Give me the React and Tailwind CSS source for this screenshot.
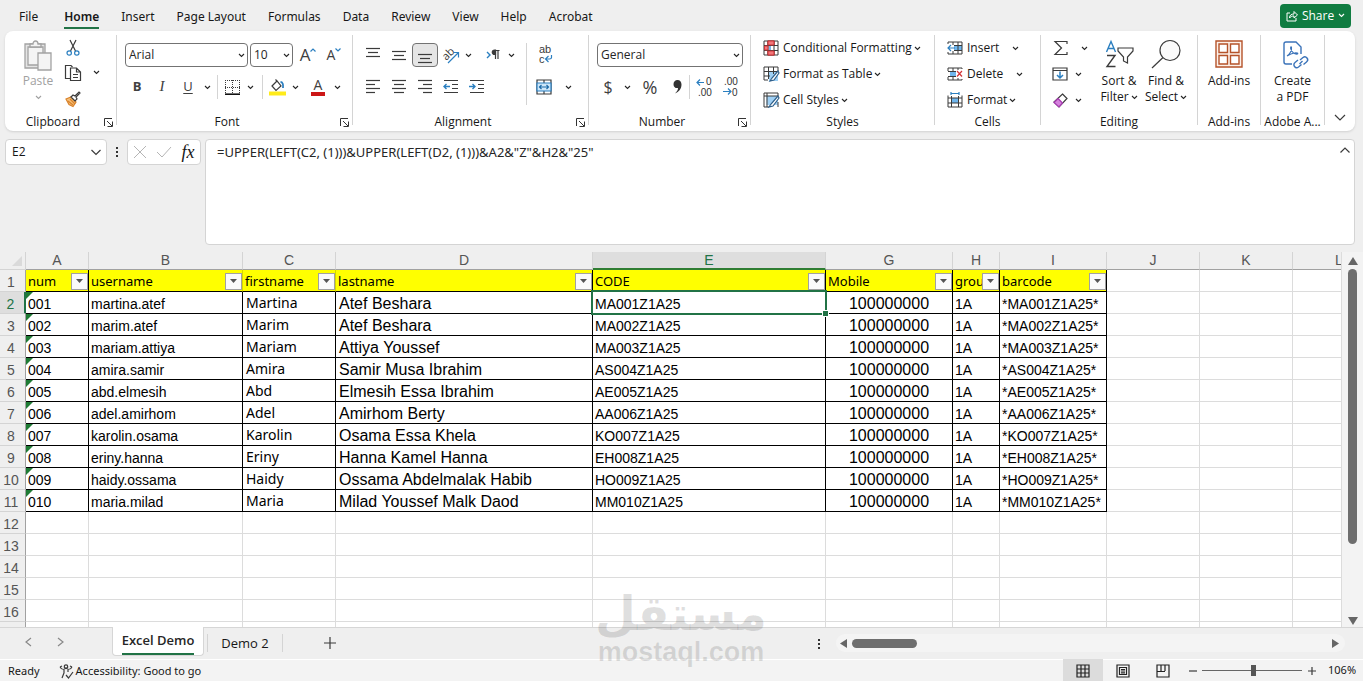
import { useState } from 'react';

const tabs = ['File', 'Home', 'Insert', 'Page Layout', 'Formulas', 'Data', 'Review', 'View', 'Help', 'Acrobat'];

const columns = [
  { id: 'A', col: 'w-[63px]', title: 'num', line: true },
  { id: 'B', col: 'w-[154px]', title: 'username' },
  { id: 'C', col: 'w-[93px]', title: 'firstname' },
  { id: 'D', col: 'w-[257px]', title: 'lastname', line: true },
  { id: 'E', col: 'w-[233px]', title: 'CODE', line: true },
  { id: 'G', col: 'w-[127px]', title: 'Mobile', line: true },
  { id: 'H', col: 'w-[47px]', title: 'group', line: true },
  { id: 'I', col: 'w-[107px]', title: 'barcode', line: true },
  { id: 'J', col: 'w-[93px]' },
  { id: 'K', col: 'w-[93px]' },
  { id: 'L', col: 'w-[93px]' },
];

const people = [
  ['001', 'martina.atef', 'Martina', 'Atef Beshara', 'MA001Z1A25'],
  ['002', 'marim.atef', 'Marim', 'Atef Beshara', 'MA002Z1A25'],
  ['003', 'mariam.attiya', 'Mariam', 'Attiya Youssef', 'MA003Z1A25'],
  ['004', 'amira.samir', 'Amira', 'Samir Musa Ibrahim', 'AS004Z1A25'],
  ['005', 'abd.elmesih', 'Abd', 'Elmesih Essa Ibrahim', 'AE005Z1A25'],
  ['006', 'adel.amirhom', 'Adel', 'Amirhom Berty', 'AA006Z1A25'],
  ['007', 'karolin.osama', 'Karolin', 'Osama Essa Khela', 'KO007Z1A25'],
  ['008', 'eriny.hanna', 'Eriny', 'Hanna Kamel Hanna', 'EH008Z1A25'],
  ['009', 'haidy.ossama', 'Haidy', 'Ossama Abdelmalak Habib', 'HO009Z1A25'],
  ['010', 'maria.milad', 'Maria', 'Milad Youssef Malk Daod', 'MM010Z1A25'],
];

// The last row is only a sliver above the sheet tabs, so it has no number
const emptyRows = ['12', '13', '14', '15', '16', ''];

function Chevron({ className = 'text-neutral-800' }) {
  return (
    <svg width="7" height="5" viewBox="0 0 7 5" className={`shrink-0 ${className}`} fill="none" stroke="currentColor" strokeWidth="1.1">
      <path d="M1 1l2.500 2.500L6 1" />
    </svg>
  );
}

function Icon({ w = 18, h = 18, children }) {
  return (
    <svg width={w} height={h} viewBox={`0 0 ${w} ${h}`} className="shrink-0 overflow-visible" fill="none" stroke="#3b3b3b" strokeWidth="1.2">
      {children}
    </svg>
  );
}

function Tool({ label, className = 'w-[26px]', children }) {
  return (
    <button type="button" aria-label={label} className={`flex h-6 shrink-0 items-center justify-center ${className}`}>
      {children}
    </button>
  );
}

function Group({ label, className, launcher, children }) {
  return (
    <>
      <section className={`flex shrink-0 flex-col pt-1 ${className}`}>
        <div className="flex h-[78px]">{children}</div>
        <div className="flex h-[18px] items-center">
          <span className="flex-1 text-center whitespace-nowrap">{label}</span>
          {launcher && (
            <button type="button" aria-label={`${label} settings`} className="flex w-[15px] justify-center">
              <svg width="9" height="9" viewBox="0 0 9 9" fill="none" stroke="#333">
                <path d="M.5 8V.5H8M3 3l5 5M8.500 3.500v5h-5" />
              </svg>
            </button>
          )}
        </div>
      </section>
      <div className="mt-1 mb-1.5 w-px shrink-0 bg-neutral-300" />
    </>
  );
}

function Dropdown({ label, options, className }) {
  return (
    <div className={`relative ${className}`}>
      <select aria-label={label} className="block h-6 w-full appearance-none rounded border border-neutral-500 bg-white pl-[3px] text-xs text-neutral-800">
        {options.map((o) => (
          <option key={o}>{o}</option>
        ))}
      </select>
      <span className="pointer-events-none absolute top-2.5 right-[3px]">
        <Chevron />
      </span>
    </div>
  );
}

// Paragraph icon, x/width pair per line
function Lines({ rows, top = 2, step = 4 }) {
  return (
    <Icon w={16}>
      {rows.map(([x, w], i) => (
        <path key={i} d={`M${x} ${top + i * step + 0.5}h${w}`} />
      ))}
    </Icon>
  );
}

function Clipboard() {
  return (
    <Group label="Clipboard" className="w-[111px]" launcher>
      <button type="button" className="ml-2.5 flex w-[46px] flex-col items-center pt-[5px] text-neutral-400">
        <svg width="28" height="31" viewBox="0 0 28 31" fill="#f4f4f4" stroke="#a3a3a3" strokeWidth="1.3">
          <path d="M1 4h20v24H1z" fill="#e4e4e4" />
          <path d="M4 7h15v18H4z" />
          <path d="M6 7V4h3c0-4 5-4 5 0h3v3z" />
          <path d="M14 13h13v17H14z" />
        </svg>
        <span className="leading-5">Paste</span>
        <span className="mt-1">
          <Chevron className="text-neutral-400" />
        </span>
      </button>
      <div className="flex flex-col">
        <Tool label="Cut" className="mt-px w-6">
          <Icon w={14} h={16}>
            <path d="M4 0l5.500 11M10 0L4.500 11" />
            <circle cx="3.200" cy="13" r="2.200" stroke="#2b7fc0" />
            <circle cx="10.800" cy="13" r="2.200" stroke="#2b7fc0" />
          </Icon>
        </Tool>
        <div className="flex">
          <Tool label="Copy" className="mt-px w-6">
            <Icon w={16} h={16}>
              <path d="M5 13.500H.5V.5h5.500l1.500 1.500" />
              <path d="M5.500 3h6l4 4v8.500h-10zM11.500 3v4h4M8 9.500h5M8 12.500h5" />
            </Icon>
          </Tool>
          <Tool label="Copy options" className="w-[22px]">
            <Chevron />
          </Tool>
        </div>
        <Tool label="Format painter" className="mt-0.5 w-6">
          <Icon w={16} h={16}>
            <path d="M1 8l5-2 5 5-3 4.500-4-2z" fill="#f6c27c" stroke="#d9822b" />
            <path d="M3 10l5 4M5 8l5 5" stroke="#d9822b" />
            <path d="M6 6l2-2 2 1 4-4 1 1-4 4 1 2-2 2z" fill="#fff" />
          </Icon>
        </Tool>
      </div>
    </Group>
  );
}

function FontGroup() {
  return (
    <Group label="Font" className="w-[235px]" launcher>
      <div className="flex flex-col pt-1 pl-2">
        <div className="flex h-8 items-center">
          <Dropdown label="Font" options={['Arial', 'Calibri']} className="mr-0.5 w-[123px]" />
          <Dropdown label="Font size" options={['10', '11', '12']} className="mr-0.5 w-[43px]" />
          <Tool label="Grow font">
            <span className="text-[17px] text-neutral-700">A</span>
            <svg width="6" height="4" viewBox="0 0 6 4" className="mb-2.5" fill="none" stroke="#2b7fc0" strokeWidth="1.2"><path d="M.5 3.500L3 1l2.500 2.500" /></svg>
          </Tool>
          <Tool label="Shrink font">
            <span className="text-sm text-neutral-700">A</span>
            <svg width="6" height="4" viewBox="0 0 6 4" className="mb-2.5" fill="none" stroke="#2b7fc0" strokeWidth="1.2"><path d="M.5.5L3 3 5.500.5" /></svg>
          </Tool>
        </div>
        <div className="flex h-8 items-center text-neutral-700">
          <Tool label="Bold" className="w-6"><b className="text-[13px]">B</b></Tool>
          <Tool label="Italic"><i className="font-['Liberation_Serif'] text-[15px]">I</i></Tool>
          <Tool label="Underline"><u className="text-[13px] underline-offset-2">U</u></Tool>
          <Tool label="Underline style" className="w-3"><Chevron /></Tool>
          <div className="mx-1 h-6 w-px bg-neutral-300" />
          <Tool label="Borders" className="w-5">
            <Icon w={15} h={15}>
              <path d="M.5 0v13M7.500 0v13M14.500 0v13M0 .5h15M0 7.500h15" strokeDasharray="1 1" strokeWidth="1" />
              <path d="M0 14.200h15" stroke="#111" strokeWidth="1.600" />
            </Icon>
          </Tool>
          <Tool label="Border style" className="w-4"><Chevron /></Tool>
          <div className="mx-1 h-6 w-px bg-neutral-300" />
          <Tool label="Fill color" className="w-5">
            <Icon w={17} h={17}>
              <path d="M3 7l5-5 4 5-5 4.500zM8 2L6.500.5" />
              <path d="M11.500 3c2 0 3 2 2.500 6" stroke="#2b7fc0" strokeWidth="1.800" />
              <path d="M0 14.500h17" stroke="#ffeb1a" strokeWidth="4" />
            </Icon>
          </Tool>
          <Tool label="Fill color options" className="w-4"><Chevron /></Tool>
          <Tool label="Font color" className="w-[30px]">
            <span className="border-b-4 border-[#cc1616] px-[3px] text-sm leading-[14px]">A</span>
          </Tool>
          <Tool label="Font color options" className="w-2"><Chevron /></Tool>
        </div>
      </div>
    </Group>
  );
}

function Alignment() {
  return (
    <Group label="Alignment" className="w-[235px]" launcher>
      <div className="ml-[7px] flex w-[166px] flex-col pt-1">
        <div className="flex h-8 items-center">
          <Tool label="Top align"><Lines rows={[[1, 14], [3, 10], [1, 14]]} /></Tool>
          <Tool label="Middle align"><Lines rows={[[1, 14], [3, 10], [1, 14]]} top={5} /></Tool>
          <Tool label="Bottom align" className="w-[26px] rounded border border-neutral-500 bg-neutral-200"><Lines rows={[[1, 14], [3, 10], [1, 14]]} top={8} /></Tool>
          <Tool label="Orientation">
            <Icon>
              <text x="1" y="13" transform="rotate(-45 5 10)" fontSize="11" fill="#3b3b3b" stroke="none">ab</text>
              <path d="M6 17L16 7M11.500 6.500H16.500V11.500" stroke="#2b7fc0" />
            </Icon>
          </Tool>
          <Tool label="Orientation options" className="w-2"><Chevron /></Tool>
          <Tool label="Text direction" className="ml-2 w-[26px]">
            <Icon w={14} h={12}>
              <path d="M1 3l3 3-3 3" stroke="#2b7fc0" strokeWidth="1.400" />
              <path d="M9.500 10V1.500M12 10V1.500M13.500 1.500H9" />
              <path d="M9.500 1H8.500a2.200 2.200 0 000 4.500h1z" fill="#3b3b3b" />
            </Icon>
          </Tool>
          <Tool label="Direction options" className="w-2.5"><Chevron /></Tool>
        </div>
        <div className="flex h-8 items-center">
          <Tool label="Align left"><Lines rows={[[1, 14], [1, 9], [1, 14], [1, 9]]} /></Tool>
          <Tool label="Center"><Lines rows={[[1, 14], [3, 10], [1, 14], [3, 10]]} /></Tool>
          <Tool label="Align right"><Lines rows={[[1, 14], [6, 9], [1, 14], [6, 9]]} /></Tool>
          <Tool label="Decrease indent">
            <Icon w={16}>
              <path d="M1 2.500h14M9 6.500h6M9 10.500h6M1 14.500h14" />
              <path d="M7 8.500H1M3.500 6L1 8.500 3.500 11" stroke="#2b7fc0" strokeWidth="1.400" />
            </Icon>
          </Tool>
          <Tool label="Increase indent">
            <Icon w={16}>
              <path d="M1 2.500h14M9 6.500h6M9 10.500h6M1 14.500h14" />
              <path d="M0 8.500h6M3.500 6L6 8.500 3.500 11" stroke="#2b7fc0" strokeWidth="1.400" />
            </Icon>
          </Tool>
        </div>
      </div>
      <div className="mt-2 h-[62px] w-px bg-neutral-300" />
      <div className="flex flex-col pt-1">
        <div className="flex h-8 items-center">
          <Tool label="Wrap text" className="w-[36px]">
            <Icon w={15} h={18}>
              <g className="font-['Liberation_Sans']" fontSize="11" fill="#3b3b3b" stroke="none">
                <text x="1" y="7">ab</text>
                <text x="1" y="17">c</text>
              </g>
              <path d="M13.500 9v2.500c0 1-1 1.500-2 1.500H8M10.500 10L7.500 13l3 3" stroke="#2b7fc0" />
            </Icon>
          </Tool>
        </div>
        <div className="flex h-8 items-center">
          <Tool label="Merge and center" className="w-[34px]">
            <Icon w={16} h={16}>
              <path d="M1 1h14v14H1zM8 1v3M8 12v3" />
              <path d="M1 4h14v8H1z" fill="#cfe8fa" stroke="#2b7fc0" />
              <path d="M3.500 8h9M5.500 6l-2 2 2 2M10.500 6l2 2-2 2" stroke="#1c6aa8" />
            </Icon>
          </Tool>
          <Tool label="Merge options" className="w-[14px]"><Chevron /></Tool>
        </div>
      </div>
    </Group>
  );
}

function NumberGroup() {
  return (
    <Group label="Number" className="w-[161px]" launcher>
      <div className="flex flex-col pt-1 pl-2">
        <div className="flex h-8 items-center">
          <Dropdown label="Number format" options={['General', 'Number']} className="w-[146px]" />
        </div>
        <div className="flex h-8 items-center text-neutral-700">
          <Tool label="Currency" className="w-[22px]"><span className="text-base">$</span></Tool>
          <Tool label="Currency options" className="w-4"><Chevron /></Tool>
          <Tool label="Percent" className="w-[30px]"><span className="text-lg">%</span></Tool>
          <Tool label="Comma style" className="w-6">
            <svg width="9" height="14" viewBox="0 0 9 14" fill="#333">
              <path d="M4.500 0C7 0 8.500 2 8.500 4.500c0 4-2.500 7.500-6.500 9 2-2 3-3.500 3-5.500C2.500 8.500.5 7 .5 4.200.5 1.800 2.200 0 4.500 0z" />
            </svg>
          </Tool>
          <div className="h-6 w-px bg-neutral-300" />
          <Tool label="Increase decimal" className="w-7">
            <Icon w={16}>
              <g className="font-['Liberation_Sans']" fontSize="10" fill="#333" stroke="none">
                <text x="10" y="7">0</text>
                <text x="2" y="18">.00</text>
              </g>
              <path d="M8 4.500H1M4 1.500L1 4.500 4 7.500" stroke="#2b7fc0" />
            </Icon>
          </Tool>
          <Tool label="Decrease decimal" className="w-6">
            <Icon w={16}>
              <g className="font-['Liberation_Sans']" fontSize="10" fill="#333" stroke="none">
                <text x="2" y="7">.00</text>
                <text x="10" y="18">0</text>
              </g>
              <path d="M1 13.500h8M6 10.500L9 13.500 6 16.500" stroke="#2b7fc0" />
            </Icon>
          </Tool>
        </div>
      </div>
    </Group>
  );
}

function MenuRow({ icon, label, text = '' }) {
  return (
    <button type="button" className="flex h-[26px] items-center whitespace-nowrap">
      {icon}
      <span className={`mr-0.5 ml-1 ${text}`}>{label}</span>
      <Chevron />
    </button>
  );
}

function Styles() {
  return (
    <Group label="Styles" className="w-[183px]">
      <div className="flex flex-col items-start pl-3">
        <MenuRow
          label="Conditional Formatting"
          icon={
            <Icon w={16} h={16}>
              <path d="M5 1h6v4H5zM5 11h6v4H5z" fill="#f2777b" stroke="#d13438" />
              <path d="M1 1h14v14H1zM1 5.500h14M1 10.500h14M5 1v14M11 1v14" strokeWidth="1" />
              <path d="M5 1h6v4H5zM5 11h6v4H5zM1.500 6H5v4H1.500z" fill="#f2777b" stroke="#d13438" strokeWidth="1" />
              <path d="M6 6h2v4H6z" fill="#7db7e8" stroke="none" />
            </Icon>
          }
        />
        <MenuRow
          label="Format as Table"
          icon={
            <Icon w={16} h={16}>
              <path d="M6 5.500h9V15H6z" fill="#9fd0f5" stroke="none" />
              <path d="M15 5V1H1v13h4M1 5.500h14M1 10h6M5.500 1v12M10.500 1v7" strokeWidth="1" />
              <path d="M15 5l-6 7-2 3 4-1 5-7z" fill="#fff" stroke="#2f5f8a" />
            </Icon>
          }
        />
        <MenuRow
          label="Cell Styles"
          icon={
            <Icon w={16} h={16}>
              <path d="M3.500 4H15v9H3.500z" fill="#9fd0f5" stroke="none" />
              <path d="M15 5V1H1v14h5M1 4h14M4 1v14M15 15v-5" strokeWidth="1" />
              <path d="M15 4l-7 8-2 3 4-1 6-8z" fill="#fff" stroke="#2f5f8a" />
            </Icon>
          }
        />
      </div>
    </Group>
  );
}

function Cells() {
  return (
    <Group label="Cells" className="w-[105px]">
      <div className="flex flex-col items-start pl-3">
        <MenuRow
          label="Insert"
          text="w-[43px] text-left"
          icon={
            <Icon w={16} h={16}>
              <path d="M7 5h8v6H7z" fill="#6fb5ec" stroke="none" />
              <path d="M1 4V2h14v12H1v-2M6 2v3M11 2v12M6 11v3M7 5.500h8M7 10.500h8" strokeWidth="1" />
              <path d="M8 8H1M4 5L1 8l3 3" stroke="#2b7fc0" />
            </Icon>
          }
        />
        <MenuRow
          label="Delete"
          text="w-[47px] text-left"
          icon={
            <Icon w={16} h={16}>
              <path d="M3 5h6v6H3z" fill="#6fb5ec" stroke="none" />
              <path d="M1 5V2h14v1M1 11v3h14v-1M6 2v3M6 11v3M11 2v2M11 12v2M1 5.500h8M1 10.500h8" strokeWidth="1" />
              <path d="M10 5l5 5.500M15 5l-5 5.500" stroke="#d13438" />
            </Icon>
          }
        />
        <MenuRow
          label="Format"
          icon={
            <Icon w={16} h={16}>
              <path d="M4.500 6h7v5h-7z" fill="#6fb5ec" stroke="none" />
              <path d="M1 3.500V15h14V3.500M1 6h14M1 11h14M4.500 4v11M11.500 4v11" strokeWidth="1" />
              <path d="M4 1.500h8M4 0v3M12 0v3" stroke="#2b7fc0" />
            </Icon>
          }
        />
      </div>
    </Group>
  );
}

function Editing() {
  return (
    <Group label="Editing" className="w-[156px]">
      <div className="flex flex-col pl-[7px]">
        <div className="flex h-[26px] items-center">
          <Tool label="AutoSum">
            <Icon w={14} h={16}><path d="M13 4V1.500H1L7.500 8 1 14.500h12V12" /></Icon>
          </Tool>
          <Tool label="AutoSum options" className="w-5"><Chevron /></Tool>
        </div>
        <div className="flex h-[26px] items-center">
          <Tool label="Fill" className="w-6">
            <Icon w={16} h={14}>
              <path d="M1 1h14v12H1zM1 3.500h14" />
              <path d="M8 4.500V11M5 8l3 3 3-3" stroke="#2b7fc0" strokeWidth="1.500" />
            </Icon>
          </Tool>
          <Tool label="Fill options" className="w-3"><Chevron /></Tool>
        </div>
        <div className="flex h-[26px] items-center">
          <Tool label="Clear" className="w-6">
            <Icon w={15} h={15}>
              <path d="M9.500 1L14 5.500 6 14 1 9z" fill="#fff" />
              <path d="M5 5.500L9.500 10 6 14 1 9.500z" fill="#d583dd" stroke="#a63bb0" />
            </Icon>
          </Tool>
          <Tool label="Clear options" className="w-3"><Chevron /></Tool>
        </div>
      </div>
      <button type="button" className="ml-0.5 flex w-[46px] flex-col items-center pt-[5px] leading-4 whitespace-nowrap">
        <Icon w={30} h={28}>
          <path d="M2.500 12L7 1.500 11.500 12M4 8.500h6" stroke="#2b7fc0" strokeWidth="1.400" />
          <path d="M3 15.500h8L3 26.500h8.500" strokeWidth="1.400" />
          <path d="M14 8h15v3l-5.500 6v6l-4-2v-4L14 11z" />
        </Icon>
        <span className="mt-[5px]">Sort &</span>
        <span className="flex items-center gap-0.5">Filter <Chevron /></span>
      </button>
      <button type="button" className="flex w-[48px] flex-col items-center pt-[5px] leading-4 whitespace-nowrap">
        <Icon w={30} h={28}>
          <circle cx="19" cy="10.500" r="10" fill="#fafafa" />
          <path d="M12 17.500L1 28" />
        </Icon>
        <span className="mt-[5px]">Find &</span>
        <span className="flex items-center gap-0.5">Select <Chevron /></span>
      </button>
    </Group>
  );
}

function Extras() {
  return (
    <>
      <Group label="Add-ins" className="w-[62px]">
        <button type="button" className="flex flex-1 flex-col items-center pt-[5px] leading-4">
          <Icon w={28} h={28}>
            <g stroke="#b5532a" strokeWidth="1.400">
              <path d="M1 1h26v26H1z" fill="#fdf1ea" />
              <path d="M4 4h8.500v8.500H4zM15.500 4H24v8.500h-8.500zM4 15.500h8.500V24H4zM15.500 15.500H24V24h-8.500z" fill="#fff" />
            </g>
          </Icon>
          <span className="mt-[5px]">Add-ins</span>
        </button>
      </Group>
      <Group label="Adobe A..." className="w-[63px]">
        <button type="button" className="flex flex-1 flex-col items-center pt-[5px] leading-4">
          <Icon w={28} h={28}>
            <g stroke="#3b73b9" strokeWidth="1.400">
              <path d="M13 24H7a2 2 0 01-2-2V4a2 2 0 012-2h10l5 5v7" />
              <path d="M8 16c3-2 5-6 4.500-8.500-.5-1.500-1.500 0-.5 2 1.500 3 4 5 6.500 4.500 1-.5-.5-1.500-3-1-3 .5-5 1.500-7.500 3z" strokeWidth="1.100" />
              <path d="M19 20l-3 2.500a2.800 2.800 0 003.500 4.500l3-2.500M20.500 24l3-3M21 20l3-2.500a2.800 2.800 0 013.500 4.500l-3 2.500" />
            </g>
          </Icon>
          <span className="mt-[5px]">Create</span>
          <span>a PDF</span>
        </button>
      </Group>
      <div className="flex flex-1 items-end justify-center pb-2">
        <button type="button" aria-label="Collapse ribbon">
          <Icon w={12} h={12}><path d="M1 4l5 5 5-5" /></Icon>
        </button>
      </div>
    </>
  );
}

function FormulaBar() {
  return (
    <div className="flex items-start pt-2 pr-2 pb-[7px] pl-[5px]">
      <div className="flex h-[26px] w-[102px] items-center rounded border border-neutral-300 bg-white">
        <input aria-label="Name box" defaultValue="E2" className="w-0 flex-1 pl-1.5 text-xs outline-none" />
        <button type="button" aria-label="Named ranges" className="pr-1">
          <Icon w={12} h={8}><path d="M1.500 2L6 6.500 10.500 2" /></Icon>
        </button>
      </div>
      <svg width="20" height="26" viewBox="0 0 20 26" fill="#333">
        <path d="M9 8h2v2H9zM9 12h2v2H9zM9 16h2v2H9z" />
      </svg>
      <div className="mr-1 flex h-[26px] w-[74px] items-center rounded border border-neutral-300 bg-white">
        <Tool label="Cancel" className="w-6">
          <svg width="14" height="14" viewBox="0 0 14 14" stroke="#b5b5b5"><path d="M1 1l12 12M13 1L1 13" /></svg>
        </Tool>
        <Tool label="Enter" className="w-6">
          <svg width="16" height="12" viewBox="0 0 16 12" fill="none" stroke="#b5b5b5"><path d="M1 6l5 5L15 1" /></svg>
        </Tool>
        <Tool label="Insert function" className="w-6">
          <i className="font-['Liberation_Serif'] text-lg">fx</i>
        </Tool>
      </div>
      <div className="flex h-[106px] flex-1 rounded border border-neutral-300 bg-white">
        <textarea
          aria-label="Formula"
          spellCheck={false}
          className="flex-1 resize-none pt-[3px] pl-[11px] font-['Noto_Sans'] text-[13px] leading-[18px] text-neutral-800 outline-none"
          defaultValue={'=UPPER(LEFT(C2, (1)))&UPPER(LEFT(D2, (1)))&A2&"Z"&H2&"25"'}
        />
        <button type="button" aria-label="Collapse formula bar" className="flex h-5 w-[18px] items-center justify-center">
          <Icon w={12} h={8}><path d="M1.500 6.500L6 2l4.500 4.500" /></Icon>
        </button>
      </div>
    </div>
  );
}

function FilterHead({ title }) {
  return (
    <div className="flex h-[21px] items-center">
      <span className="w-0 flex-1 overflow-hidden pt-0.5 pl-0.5 font-['Noto_Sans'] text-[13px] leading-[19px]">{title}</span>
      <button type="button" aria-label={`Filter ${title}`} className="mt-px flex h-[17px] w-[17px] items-center justify-center border border-neutral-400 bg-neutral-50">
        <svg width="7" height="4" viewBox="0 0 7 4" fill="#555"><path d="M0 0h7L3.500 4z" /></svg>
      </button>
    </div>
  );
}

function Sheet() {
  const line = 'border-r border-b border-black';
  const faint = 'border-r border-b border-[#dcdcdc]';
  return (
    <div className="flex-1 overflow-hidden border-r border-[#dcdcdc] bg-white">
      <table className="w-[1386px] table-fixed border-separate border-spacing-0 font-['Liberation_Sans'] text-sm text-black">
        <colgroup>
          <col className="w-[26px]" />
          {columns.map((c) => (
            <col key={c.id} className={c.col} />
          ))}
        </colgroup>
        <thead className="text-sm leading-[17px] text-[#555]">
          <tr className="h-[18px]">
            <th className="border-r border-b border-neutral-300 bg-[#efefef] p-0">
              <svg width="10" height="10" viewBox="0 0 10 10" className="mr-[3px] ml-auto" fill="#dadada"><path d="M10 0v10H0z" /></svg>
            </th>
            {columns.map((c) => (
              <th
                key={c.id}
                className={`p-0 font-normal ${c.id === 'E' ? 'border-r border-b-2 border-r-neutral-300 border-b-[#2f7d32] bg-[#dedede] leading-4 text-[#217346]' : 'border-r border-b border-r-neutral-300 border-b-neutral-400 bg-[#efefef]'}`}
              >
                {c.id}
              </th>
            ))}
          </tr>
        </thead>
        <tbody>
          <tr className="h-[22px]">
            <RowHead n={1} />
            {columns.map((c) => (
              <td key={c.id} className={`p-0 ${c.title ? `border-r border-b border-b-black bg-[#ffff00] ${c.line ? 'border-r-black' : 'border-r-[#d6d600]'}` : faint}`}>
                {c.title && <FilterHead title={c.title} />}
              </td>
            ))}
          </tr>
          {people.map(([num, user, first, last, code], i) => (
            <tr key={num} className="h-[22px] leading-[18px]">
              <RowHead n={i + 2} active={i === 0} />
              <td className={`relative p-0 pt-[3px] pl-0.5 ${line}`}>
                <span className="absolute top-0 left-0 border-t-[7px] border-r-[7px] border-t-[#1e7b34] border-r-transparent" />
                {num}
              </td>
              <td className={`p-0 pt-[3px] pl-0.5 ${line}`}>{user}</td>
              <td className={`p-0 pl-[3px] font-['Noto_Sans'] leading-5 ${line}`}>{first}</td>
              <td className={`p-0 pt-0.5 pl-[3px] text-base leading-[18px] ${line}`}>{last}</td>
              <td className={`relative p-0 pt-[3px] pl-0.5 ${line}`}>
                {code}
                {i === 0 && (
                  <span className="absolute -inset-0.5 z-10 border-2 border-[#217346]">
                    <span className="absolute -right-[3px] -bottom-[3px] h-[5px] w-[5px] bg-[#217346] outline outline-white" />
                  </span>
                )}
              </td>
              <td className={`p-0 pt-0.5 text-center text-base leading-[18px] ${line}`}>100000000</td>
              <td className={`p-0 pt-[3px] pl-0.5 ${line}`}>1A</td>
              <td className={`p-0 pt-[3px] pl-0.5 ${line}`}>*{code}*</td>
              <td className={faint} />
              <td className={faint} />
              <td className={faint} />
            </tr>
          ))}
          {emptyRows.map((n) => (
            <tr key={n} className="h-[22px]">
              <RowHead n={n} />
              {columns.map((c) => (
                <td key={c.id} className={faint} />
              ))}
            </tr>
          ))}
        </tbody>
      </table>
    </div>
  );
}

function RowHead({ n, active }) {
  return (
    <th
      className={`border-b border-b-neutral-300 p-0 pt-[3px] pr-[3px] text-sm leading-[18px] font-normal ${
        active ? 'border-r-2 border-r-[#217346] bg-[#dedede] text-[#217346]' : 'border-r border-r-neutral-400 bg-[#efefef] text-[#555]'
      }`}
    >
      {n}
    </th>
  );
}

function VerticalScroll() {
  return (
    <div className="flex w-[21px] flex-col items-center bg-[#f3f3f3] pt-[5px] pb-0.5">
      <svg width="10" height="8" viewBox="0 0 10 8" fill="#666"><path d="M5 0l5 8H0z" /></svg>
      <div className="mt-1 h-[275px] w-[9px] rounded-full bg-[#6e6e6e]" />
      <svg width="10" height="8" viewBox="0 0 10 8" className="mt-auto" fill="#666"><path d="M0 0h10L5 8z" /></svg>
    </div>
  );
}

function SheetTabs() {
  return (
    <div className="flex h-8 items-start border-t border-[#d6d6d6] bg-[#efefef] text-[13px]">
      <div className="flex h-full w-[112px] items-center pb-1 pl-[22px]">
        <Tool label="Previous sheet" className="w-3"><Icon w={8} h={10}><path d="M7 1L2 5l5 4" stroke="#888" /></Icon></Tool>
        <Tool label="Next sheet" className="ml-[21px] w-3"><Icon w={8} h={10}><path d="M1 1l5 4-5 4" stroke="#888" /></Icon></Tool>
      </div>
      <button type="button" className="-mt-px flex h-[29px] w-[92px] justify-center rounded-b border border-t-0 border-[#d6d6d6] bg-white pt-1">
        <span className="border-b-2 border-[#217346] leading-[19px] font-semibold text-neutral-800">Excel Demo</span>
      </button>
      <div className="mt-1.5 ml-[3px] h-[18px] w-px bg-neutral-300" />
      <button type="button" className="w-[74px] pt-1.5 leading-[18px]">Demo 2</button>
      <div className="mt-1.5 h-[18px] w-px bg-neutral-300" />
      <Tool label="New sheet" className="mt-[3px] ml-[35px] w-6">
        <Icon w={12} h={12}><path d="M6 0v12M0 6h12" /></Icon>
      </Tool>
      <svg width="20" height="32" viewBox="0 0 20 32" className="ml-auto" fill="#333">
        <path d="M11 11h2v2h-2zM11 15h2v2h-2zM11 19h2v2h-2z" />
      </svg>
      <div className="mt-1.5 mr-[18px] ml-[9px] flex h-[18px] w-[509px] items-center rounded-full bg-[#f4f4f4] pr-1.5 pl-1">
        <svg width="7" height="9" viewBox="0 0 7 9" fill="#666"><path d="M7 0v9L0 4.500z" /></svg>
        <div className="ml-[5px] h-[9px] w-[65px] rounded-full bg-[#6e6e6e]" />
        <svg width="7" height="9" viewBox="0 0 7 9" className="ml-auto" fill="#666"><path d="M0 0v9l7-4.500z" /></svg>
      </div>
    </div>
  );
}

function StatusBar() {
  const [zoom, setZoom] = useState(52);
  return (
    <footer className="flex h-[22px] items-center border-t border-white bg-[#f3f3f3] pl-2 font-['Noto_Sans'] text-[11px]">
      <span className="pt-px">Ready</span>
      <button type="button" className="ml-[19px] flex items-center gap-0.5 pt-px">
        <Icon w={15} h={15}>
          <circle cx="7" cy="2.500" r="1.700" />
          <path d="M1 3c1 2 3 2.500 4 2.500V9l-2 5M13 3c-1 2-2.500 2.500-4 2.500V8M5 3.500c1 1.500 3 1.500 4 0M1 3l2-1M13 3l-2-1" />
          <path d="M7 11l2.500 3L14 8" />
        </Icon>
        Accessibility: Good to go
      </button>
      <div className="ml-auto flex h-full items-center">
        <Tool label="Normal view" className="w-10 bg-[#dcdcdc]">
          <Icon w={14} h={14}><path d="M1 1h12v12H1zM5 1v12M9 1v12M1 5h12M1 9h12" stroke="#222" /></Icon>
        </Tool>
        <Tool label="Page layout view" className="w-10">
          <Icon w={14} h={14}><path d="M1 1h12v12H1zM3.500 3.500h7v7h-7zM5 5.500h4M5 7h4M5 8.800h4" stroke="#222" /></Icon>
        </Tool>
        <Tool label="Page break view" className="w-10">
          <Icon w={14} h={14}><path d="M1 1h12v12H1zM5 1v6M9 1v6M1 7.500h8" stroke="#222" /></Icon>
        </Tool>
        <Tool label="Zoom out" className="w-[19px]"><Icon w={8} h={8}><path d="M0 4h8" /></Icon></Tool>
        <input
          type="range"
          aria-label="Zoom"
          value={zoom}
          onChange={(e) => setZoom(Number(e.target.value))}
          className="h-3 w-[100px] appearance-none bg-[linear-gradient(#666,#666)] bg-[length:100%_1px] bg-center bg-no-repeat [&::-webkit-slider-thumb]:h-[11px] [&::-webkit-slider-thumb]:w-[5px] [&::-webkit-slider-thumb]:appearance-none [&::-webkit-slider-thumb]:bg-[#555]"
        />
        <Tool label="Zoom in" className="w-[19px]"><Icon w={8} h={8}><path d="M0 4h8M4 0v8" /></Icon></Tool>
        <span className="w-[42px] pl-[7px]">106%</span>
      </div>
    </footer>
  );
}

function Watermark() {
  return (
    <div className="pointer-events-none absolute bottom-[15px] left-[598px] flex w-[166px] flex-col items-center text-black/12">
      <span lang="ar" dir="rtl" className="font-['DejaVu_Sans'] text-[47px] leading-[50px] font-bold">مستقل</span>
      <span className="font-['Liberation_Sans'] text-[27px] leading-[27px] font-bold">mostaql.com</span>
    </div>
  );
}

export default function App() {
  return (
    <div className="relative flex h-screen flex-col overflow-hidden bg-[#efefef] font-['Open_Sans',sans-serif] text-xs text-neutral-900">
      <header className="flex h-[31px] shrink-0 items-center pr-3 pl-[19px]">
        <nav className="flex gap-[22px] pt-1 font-['Noto_Sans']">
          {tabs.map((tab) => (
            <a key={tab} href="#" className={tab === 'Home' ? 'ml-1 border-b-2 border-[#217346] leading-5 font-semibold' : 'leading-5'}>
              {tab}
            </a>
          ))}
        </nav>
        <button type="button" className="ml-auto flex h-6 w-[71px] items-center justify-center gap-1 rounded bg-[#107c41] font-medium text-white">
          <svg width="12" height="12" viewBox="0 0 12 12" fill="none" stroke="#fff">
            <path d="M4 3H1v8h9V8M3.500 8c0-3 2-4 4.500-4V1.500L11.500 5 8 8V6C6 6 4.500 6.500 3.500 8z" />
          </svg>
          Share
          <Chevron className="text-white" />
        </button>
      </header>

      <div className="mr-2 ml-[5px] flex h-[100px] shrink-0 rounded-lg bg-white shadow">
        <Clipboard />
        <FontGroup />
        <Alignment />
        <NumberGroup />
        <Styles />
        <Cells />
        <Editing />
        <Extras />
      </div>

      <FormulaBar />

      <main className="flex min-h-0 flex-1">
        <Sheet />
        <VerticalScroll />
      </main>

      <SheetTabs />
      <StatusBar />
      <Watermark />
    </div>
  );
}
